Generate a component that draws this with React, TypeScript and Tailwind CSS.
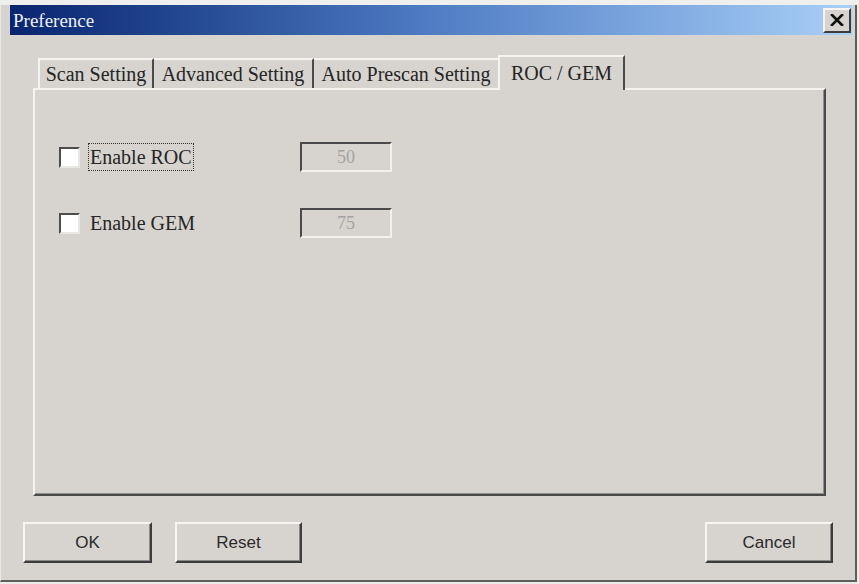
import React from "react";

const serif = { fontFamily: '"Liberation Serif", "Times New Roman", serif' };
const sans = { fontFamily: '"Liberation Sans", Arial, sans-serif' };

function Tab({ label, w, first }: { label: string; w: string; first?: boolean }) {
  return (
    <div
      className={`${w} h-[30px] flex items-center justify-center border-t-2 border-t-[#f4f3f0] border-r-2 border-r-[#4a4a4a] ${first ? "border-l-2 border-l-[#f4f3f0]" : ""} text-[20px] leading-none text-[#252525] whitespace-nowrap`}
      style={serif}
    >
      {label}
    </div>
  );
}

function Row({ label, value, focused }: { label: string; value: string; focused?: boolean }) {
  return (
    <div className="flex items-center h-[30px]">
      <div className="w-[21px] h-[21px] bg-white border-t-2 border-l-2 border-t-[#4d4d4d] border-l-[#4d4d4d] border-b-2 border-r-2 border-b-[#e9e7e3] border-r-[#e9e7e3]" />
      <div className="w-[212px] ml-[8px] flex items-center">
        <span
          className={`text-[20px] leading-none text-[#252525] px-[1px] py-[3px] border border-dotted ${focused ? "border-[#333]" : "border-transparent"}`}
          style={serif}
        >
          {label}
        </span>
      </div>
      <div
        className="w-[92px] h-[30px] flex items-center justify-center border-t-2 border-l-2 border-t-[#4a4a4a] border-l-[#4a4a4a] border-b-2 border-r-2 border-b-[#f2f1ee] border-r-[#f2f1ee] text-[18px] text-[#a3a3a3]"
        style={serif}
      >
        {value}
      </div>
    </div>
  );
}

function Btn({ label, w }: { label: string; w: string }) {
  return (
    <div
      className={`${w} h-[41px] flex items-center justify-center border-2 border-t-[#f6f5f2] border-l-[#f6f5f2] border-b-[#3c3c3c] border-r-[#3c3c3c] shadow-[inset_-1px_-1px_0_#8a8a8a] text-[17px] text-[#2a2a2a]`}
      style={sans}
    >
      {label}
    </div>
  );
}

export default function App() {
  return (
    <div className="w-[859px] h-[584px] bg-[#ebebea] flex flex-col overflow-hidden">
      <div className="h-[5px] shrink-0 bg-[#efefee]" />
      <div className="w-[857px] h-[577px] bg-[#d7d4cf] border-l border-l-[#e9e8e5] border-r-2 border-r-[#5e5e5e] border-b-2 border-b-[#5e5e5e] flex flex-col">
        {/* title bar */}
        <div className="ml-[9px] mr-[3px] h-[30px] flex items-center bg-gradient-to-r from-[#0a2470] via-[#4f7cc4] to-[#a9d0f7]">
          <span className="ml-[3px] text-[19px] text-[#eef1f8] leading-none" style={serif}>
            Preference
          </span>
          <div className="ml-auto mr-[1px] w-[28px] h-[25px] bg-[#d7d4cf] border-2 border-t-[#f6f5f2] border-l-[#f6f5f2] border-b-[#3c3c3c] border-r-[#3c3c3c] flex items-center justify-center">
            <svg width="14" height="12" viewBox="0 0 14 12">
              <path d="M2 1 L12 11 M12 1 L2 11" stroke="#111" strokeWidth="2.6" strokeLinecap="square" />
            </svg>
          </div>
        </div>

        {/* tabs */}
        <div className="mt-[20px] ml-[37px] h-[33px] flex items-end">
          <Tab label="Scan Setting" w="w-[116px]" first />
          <Tab label="Advanced Setting" w="w-[160px]" />
          <Tab label="Auto Prescan Setting" w="w-[186px]" />
          <div
            className="relative z-10 -ml-[2px] -mb-[2px] w-[127px] h-[35px] bg-[#d7d4cf] border-t-2 border-l-2 border-t-[#f4f3f0] border-l-[#f4f3f0] border-r-2 border-r-[#4a4a4a] flex justify-center pt-[6px] text-[20px] leading-none text-[#252525]"
            style={serif}
          >
            ROC / GEM
          </div>
        </div>

        {/* panel */}
        <div className="ml-[32px] w-[793px] h-[408px] border-t-2 border-l-2 border-t-[#f4f3f0] border-l-[#f4f3f0] border-r-2 border-b-2 border-r-[#4a4a4a] border-b-[#4a4a4a] shadow-[inset_-1px_-1px_0_#8e8e8e] flex flex-col gap-[36px] pl-[24px] pt-[52px]">
          <Row label="Enable ROC" value="50" focused />
          <Row label="Enable GEM" value="75" />
        </div>

        {/* buttons */}
        <div className="mt-[26px] ml-[22px] flex">
          <Btn label="OK" w="w-[129px]" />
          <div className="w-[23px]" />
          <Btn label="Reset" w="w-[127px]" />
          <div className="ml-auto mr-[22px]">
            <Btn label="Cancel" w="w-[128px]" />
          </div>
        </div>
      </div>
    </div>
  );
}
